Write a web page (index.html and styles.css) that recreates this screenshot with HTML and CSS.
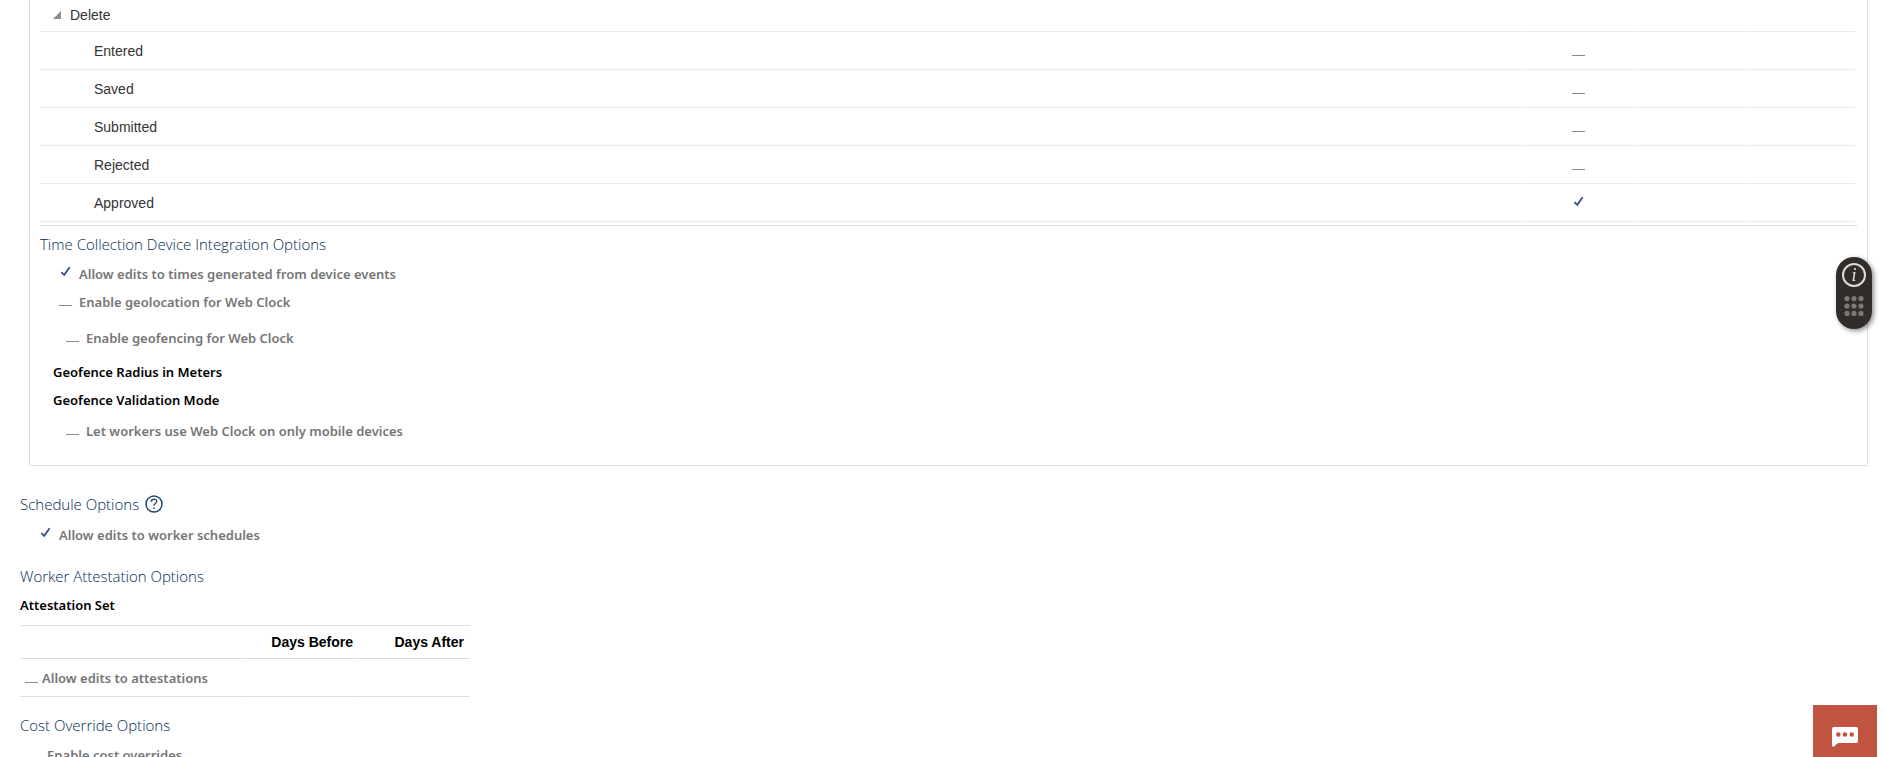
FILE: index.html
```html
<!DOCTYPE html>
<html lang="en">
<head>
<meta charset="utf-8">
<title>Time Entry Profile</title>
<link rel="stylesheet" href="styles.css">
</head>
<body>
<main class="page">
  <section class="panel">
    <div class="tree">
      <table class="tree-table">
        <colgroup><col><col class="col-flag"><col class="col-flag"><col class="col-flag"></colgroup>
        <tbody>
          <tr class="parent"><th scope="row"><button class="toggle" type="button" aria-expanded="true"><svg class="arrow" viewBox="0 0 8 8"><path d="M8 0V8H0Z"/></svg>Delete</button></th><td></td><td></td><td></td></tr>
          <tr><th scope="row"><label for="entered">Entered</label></th><td><input class="flag" type="checkbox" id="entered" disabled></td><td></td><td></td></tr>
          <tr><th scope="row"><label for="saved">Saved</label></th><td><input class="flag" type="checkbox" id="saved" disabled></td><td></td><td></td></tr>
          <tr><th scope="row"><label for="submitted">Submitted</label></th><td><input class="flag" type="checkbox" id="submitted" disabled></td><td></td><td></td></tr>
          <tr><th scope="row"><label for="rejected">Rejected</label></th><td><input class="flag" type="checkbox" id="rejected" disabled></td><td></td><td></td></tr>
          <tr><th scope="row"><label for="approved">Approved</label></th><td><input class="flag" type="checkbox" id="approved" checked disabled></td><td></td><td></td></tr>
        </tbody>
      </table>
    </div>
    <h2 class="heading device-heading">Time Collection Device Integration Options</h2>
    <label class="option option-first"><input class="flag" type="checkbox" checked disabled>Allow edits to times generated from device events</label>
    <label class="option option-geo"><input class="flag" type="checkbox" disabled>Enable geolocation for Web Clock</label>
    <label class="option option-nested option-fence"><input class="flag" type="checkbox" disabled>Enable geofencing for Web Clock</label>
    <div class="field">Geofence Radius in Meters</div>
    <div class="field">Geofence Validation Mode</div>
    <label class="option option-nested option-mobile"><input class="flag" type="checkbox" disabled>Let workers use Web Clock on only mobile devices</label>
  </section>

  <section class="schedule">
    <h2 class="heading">Schedule Options
      <button class="help" type="button" aria-label="Help"><svg viewBox="0 0 18 18" fill="none" stroke="#25496b"><circle cx="9" cy="9" r="8" stroke-width="1.5"/><path d="M6.2 6.7C6.4 3.3 11.8 3.4 11.7 6.6C11.6 8.6 9 8.6 9 10.8" stroke-width="1.4"/><path d="M9 12.4V14" stroke-width="1.5"/></svg></button>
    </h2>
    <label class="option"><input class="flag" type="checkbox" checked disabled>Allow edits to worker schedules</label>
  </section>

  <section class="attestation">
    <h2 class="heading">Worker Attestation Options</h2>
    <div class="field field-root">Attestation Set</div>
    <table class="days">
      <colgroup><col><col class="col-flag"><col class="col-flag"></colgroup>
      <thead><tr><th></th><th scope="col">Days Before</th><th scope="col">Days After</th></tr></thead>
      <tbody><tr><td><label class="option option-cell"><input class="flag" type="checkbox" disabled>Allow edits to attestations</label></td><td></td><td></td></tr></tbody>
    </table>
  </section>

  <section class="cost">
    <h2 class="heading">Cost Override Options</h2>
    <label class="option option-cost"><input class="flag" type="checkbox" disabled>Enable cost overrides</label>
  </section>
</main>

<button class="guide" type="button" aria-label="Guided learning">
  <span class="info">i</span>
  <svg class="dots" viewBox="0 0 20 20"><g fill="#7d7874"><circle cx="3" cy="2.6" r="2.6"/><circle cx="10" cy="2.6" r="2.6"/><circle cx="17" cy="2.6" r="2.6"/><circle cx="3" cy="10" r="2.6"/><circle cx="10" cy="10" r="2.6"/><circle cx="17" cy="10" r="2.6"/><circle cx="3" cy="17.4" r="2.6"/><circle cx="10" cy="17.4" r="2.6"/><circle cx="17" cy="17.4" r="2.6"/></g></svg>
</button>
<button class="chat" type="button" aria-label="Chat">
  <svg viewBox="0 0 26 20"><path fill="#fff" d="M2 0H24Q26 0 26 2V14Q26 16 24 16H6L2 19.6Q0 20.4 0 18V2Q0 0 2 0Z"/><g fill="#c15440"><circle cx="6.3" cy="7.5" r="2.3"/><circle cx="13" cy="7.5" r="2.3"/><circle cx="19.7" cy="7.5" r="2.3"/></g></svg>
</button>
</body>
</html>
```
FILE: styles.css
```css
* { box-sizing: border-box; }

html { overflow: hidden; height: 100%; }

body {
  margin: 0;
  height: 100%;
  overflow: hidden;
  background: #fff;
  font-family: "Noto Sans", "Open Sans", sans-serif;
  font-size: 13px;
  color: #333;
}

button {
  border: 0;
  padding: 0;
  background: none;
  font: inherit;
  color: inherit;
}

table {
  border-collapse: separate;
  border-spacing: 0;
  table-layout: fixed;
}

.page { padding: 0 16px 0 20px; }

.panel {
  margin-left: 9px;
  padding: 0 10px 17px;
  border: 1px solid #d6dfe6;
  border-top: 0;
  border-radius: 0 0 2px 2px;
}

.tree {
  padding: 0 1px 3px 0;
  border-bottom: 1px solid #d6dce1;
}

.tree-table {
  width: 100%;
  font-family: "Liberation Sans", Arial, sans-serif;
  font-size: 14px;
  line-height: 16px;
}

.tree-table th,
.tree-table td {
  height: 38px;
  padding: 0;
  border-right: 1px solid transparent;
  border-bottom: 1px solid #ebebeb;
  text-align: center;
  vertical-align: middle;
}

.tree-table td { padding-bottom: 4px; }

.tree-table th {
  padding-left: 54px;
  font-weight: 400;
  text-align: left;
}

.tree-table .parent th,
.tree-table .parent td {
  height: 32px;
  padding-bottom: 2px;
}

.tree-table .parent th { padding-left: 13px; }

.col-flag { width: 111px; }

.toggle {
  display: flex;
  align-items: center;
  gap: 9px;
}

.arrow {
  width: 8px;
  height: 8px;
  fill: #878d92;
}

.flag {
  appearance: none;
  flex: none;
  width: 13px;
  height: 12px;
  margin: 0;
  vertical-align: middle;
  background: linear-gradient(#8a8a8a, #8a8a8a) bottom / 100% 1px no-repeat;
}

.flag:checked {
  background: url("data:image/svg+xml,%3Csvg xmlns='http://www.w3.org/2000/svg' viewBox='0 0 13 12'%3E%3Cpath d='M2.3 6.2L5.2 8.8L10.6 1.2' fill='none' stroke='%23344f8f' stroke-width='1.8'/%3E%3C/svg%3E") center / 13px 12px no-repeat;
}

.heading {
  display: flex;
  align-items: center;
  gap: 6px;
  height: 32px;
  margin: 0;
  font-family: "Open Sans", "Noto Sans", sans-serif;
  font-size: 15px;
  font-weight: 300;
  color: #002b50;
}

.device-heading { height: 36px; }

.help,
.help svg {
  display: block;
  width: 18px;
  height: 18px;
}

.option {
  display: flex;
  align-items: center;
  gap: 7px;
  height: 30px;
  padding-left: 19px;
  font-weight: 600;
  color: #757575;
}

.option .flag { margin-bottom: 4px; }

.option-first { height: 24px; }
.option-geo { height: 32px; }
.option-nested { padding-left: 26px; }
.option-fence { height: 40px; }
.option-mobile { height: 34px; }

.field {
  padding-left: 13px;
  font-weight: 600;
  line-height: 28px;
  color: #000;
}

.field-root {
  padding-left: 0;
  line-height: 26px;
}

.schedule { padding-top: 22px; }
.attestation { padding-top: 10px; }
.cost { padding-top: 12px; }

.days {
  width: 450px;
  margin-top: 7px;
  border-top: 1px solid #d6dfe6;
}

.days th,
.days td {
  height: 38px;
  padding: 0;
  border-right: 1px solid transparent;
  border-bottom: 1px solid #d6dfe6;
}

.days th {
  height: 33px;
  padding-right: 5px;
  font-family: "Liberation Sans", Arial, sans-serif;
  font-size: 14px;
  font-weight: 700;
  text-align: right;
  color: #000;
}

.option-cell {
  gap: 4px;
  padding-left: 5px;
}

.option-cell .flag { margin-bottom: 2px; }

.option-cost {
  height: 28px;
  padding-left: 7px;
}

.guide {
  position: fixed;
  top: 257px;
  right: 12px;
  display: flex;
  flex-direction: column;
  align-items: center;
  gap: 9px;
  width: 36px;
  height: 72px;
  padding-top: 6px;
  border-radius: 18px;
  background: #322d2a;
  box-shadow: 2px 2px 5px rgba(0, 0, 0, 0.45);
}

.info {
  width: 24px;
  height: 24px;
  border: 2px solid #dedcda;
  border-radius: 50%;
  font: italic 400 18px/20px "Liberation Serif", serif;
  color: #e4e2e0;
}

.dots {
  width: 20px;
  height: 20px;
}

.chat {
  position: fixed;
  right: 7px;
  bottom: 0;
  display: flex;
  justify-content: center;
  width: 64px;
  height: 52px;
  padding-top: 22px;
  background: #c15440;
}

.chat svg {
  width: 26px;
  height: 20px;
}
```
